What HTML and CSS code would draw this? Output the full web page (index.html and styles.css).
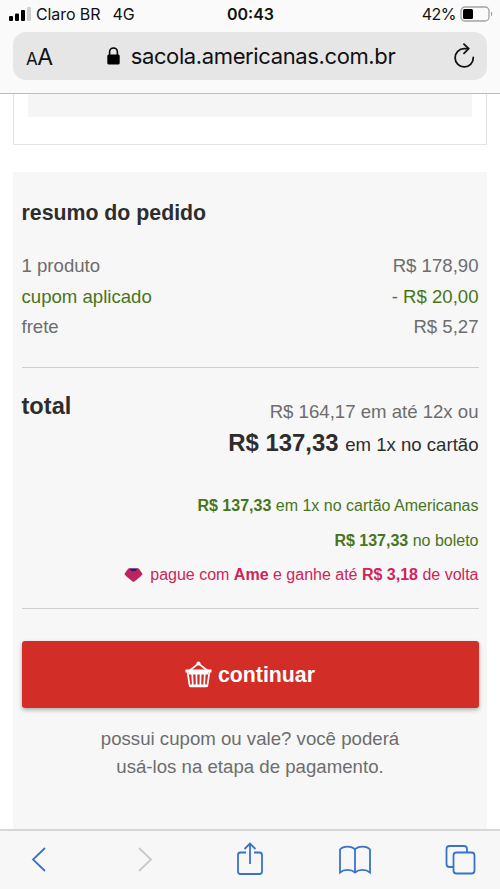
FILE: index.html
```html
<!DOCTYPE html>
<html lang="pt-BR">
<head>
<meta charset="utf-8">
<title>sacola.americanas.com.br</title>
<link rel="stylesheet" href="styles.css">
</head>
<body>
<header class="browser-top">
  <div class="status">
    <div class="carrier">
      <svg class="signal" width="23" height="16" viewBox="0 0 23 16"><rect x="0" y="10" width="4" height="5" rx="1"/><rect x="6" y="7.500" width="4" height="7.500" rx="1"/><rect x="12" y="4" width="4" height="11" rx="1"/><rect x="18" y="1" width="4" height="14" rx="1" fill="#cfcfcf"/></svg>
      <span class="name">Claro BR</span><span class="net">4G</span>
    </div>
    <div class="clock">00:43</div>
    <div class="power"><span>42%</span>
      <svg width="33" height="17" viewBox="0 0 33 17"><rect x="1" y="1" width="28" height="14" rx="4" fill="none" stroke="#a2a2a2" stroke-width="1.3"/><rect x="3" y="3" width="10" height="10" rx="1.5"/><path d="M31 5.500v5q1.300-.7 1.300-2.500t-1.300-2.500z" fill="#a2a2a2"/></svg>
    </div>
  </div>
  <div class="address">
    <div class="reader"><span class="small-a">A</span><span>A</span></div>
    <div class="site">
      <svg width="13" height="18" viewBox="0 0 13 18"><rect x="0.300" y="7.500" width="12.400" height="10" rx="1.500"/><path d="M2.600 8V5a3.900 4 0 0 1 7.800 0v3" fill="none" stroke="#000" stroke-width="1.600"/></svg>
      <span class="url">sacola.americanas.com.br</span>
    </div>
    <svg class="reload" width="22" height="26" viewBox="0 0 22 26" fill="none" stroke="#111" stroke-width="1.800" stroke-linecap="round" stroke-linejoin="round"><path d="M20.300 14.500A9.100 9.100 0 1 1 11.200 5.700h4"/><path d="M11 1.200l4.700 4.500-4.700 4.600"/></svg>
  </div>
</header>
<main>
  <section class="item-card"><div class="item-fill"></div></section>
  <section class="summary">
    <h2>resumo do pedido</h2>
    <div class="row"><span>1 produto</span><span>R$ 178,90</span></div>
    <div class="row green"><span>cupom aplicado</span><span>- R$ 20,00</span></div>
    <div class="row"><span>frete</span><span>R$ 5,27</span></div>
    <hr class="first">
    <div class="total">
      <strong>total</strong>
      <div class="amounts">
        <div class="parcel">R$ 164,17 em até 12x ou</div>
        <div class="cash"><b>R$ 137,33</b> em 1x no cartão</div>
      </div>
    </div>
    <div class="options">
      <div class="green"><b>R$ 137,33</b> em 1x no cartão Americanas</div>
      <div class="green"><b>R$ 137,33</b> no boleto</div>
      <div class="ame">
        <svg width="19" height="15" viewBox="0 0 19 15"><path d="M4.200.5h10.600L18.600 6Q18 7.500 10.400 13.600q-.9.700-1.800 0Q1 7.500.4 6z" fill="#bd2461"/><path d="M5 .5h9L11.200 3.200H7.800z" fill="#32147c"/></svg>
        <span>pague com <b>Ame</b> e ganhe até <b>R$ 3,18</b> de volta</span>
      </div>
    </div>
    <hr class="second">
    <button class="continue">
      <svg width="27" height="27" viewBox="0 0 27 27" fill="none" stroke="#fff"><path d="M4 10L13.500 2.500 23 10" stroke-width="1.700"/><circle cx="13.500" cy="2.600" r="2" fill="#fff" stroke="none"/><path d="M.5 8.500h26v3h-26z" fill="#fff" stroke="none"/><path d="M2.600 11l2 13.500q.1.800 1 .8h15.800q.9 0 1-.8l2-13.500" stroke-width="1.700"/><path d="M4 23.500h19v2.500H4zM4 11h19v2.500H4z" fill="#fff" stroke="none"/><path d="M7.200 12l.6 12M11.400 12l.2 12M15.600 12l-.2 12M19.800 12l-.6 12" stroke-width="1.700"/></svg>
      <span>continuar</span>
    </button>
    <p class="note">possui cupom ou vale? você poderá<br>usá-los na etapa de pagamento.</p>
  </section>
</main>
<nav class="toolbar">
  <svg width="36" height="36" viewBox="0 0 36 36"><path d="M23 7L11 18.500 23 30"/></svg>
  <svg class="off" width="36" height="36" viewBox="0 0 36 36"><path d="M12 7l12 11.500L12 30"/></svg>
  <svg width="36" height="36" viewBox="0 0 36 36"><path d="M14 11.500H8.500q-2.500 0-2.500 2.500v16.500q0 2.500 2.500 2.500h19q2.500 0 2.500-2.500V14q0-2.500-2.500-2.500H22M18 23V2.500M12.500 8L18 2.500 23.500 8"/></svg>
  <svg width="36" height="36" viewBox="0 0 36 36"><path d="M18 8.500Q15.500 5.600 10.500 5.600T3 8.500v23q3-2.600 7.500-2.600T18 31.500q3-2.600 7.500-2.600T33 31.500v-23Q30.500 5.600 25.500 5.600T18 8.500zM18 8.500v23"/></svg>
  <svg width="36" height="36" viewBox="0 0 36 36"><path d="M11 26H7.500q-3 0-3-3V8q0-3 3-3h14.500q3 0 3 3v3.500"/><rect x="11.500" y="11.500" width="21" height="21" rx="3"/></svg>
</nav>
</body>
</html>
```
FILE: styles.css
```css
* { box-sizing: border-box; }
body { margin: 0; width: 500px; height: 889px; display: flex; flex-direction: column; overflow: hidden; background: #fff; font-family: "Liberation Sans", Arial, sans-serif; color: #6d6d6d; }
.browser-top { flex: none; height: 94px; background: #fafafa; border-bottom: 1px solid #bdbdbd; font-family: Inter, sans-serif; color: #111; }
.status { height: 32px; padding: 0 7px 4px 9px; display: grid; grid-template-columns: 1fr auto 1fr; align-items: center; font-size: 16px; }
.carrier, .power { display: flex; align-items: center; }
.signal { margin-right: 4px; }
.name { font-size: 16px; letter-spacing: -0.1px; }
.net { margin-left: 12px; }
.clock { margin-right: 1px; font-weight: 600; }
.power { justify-content: flex-end; gap: 4px; letter-spacing: -0.5px; }
.address { height: 48px; margin: 0 13px; padding: 0 12px 0 13px; border-radius: 13px; background: #e6e6e7; display: flex; align-items: center; justify-content: space-between; }
.reader { width: 26px; padding-top: 2px; font-size: 23px; white-space: nowrap; letter-spacing: -0.6px; }
.small-a { font-size: 17px; }
.site { display: flex; align-items: center; gap: 11px; margin-right: 3px; }
.url { font-size: 22px; letter-spacing: -0.38px; }
main { flex: 1; min-height: 0; overflow: hidden; }
.item-card { height: 51px; margin: 0 13px; padding: 0 14px; border: solid #e3e3e3; border-width: 0 1px 1px; }
.item-fill { height: 23px; background: #f5f5f5; }
.summary { height: 680px; margin: 27px 13px 0; padding: 27px 8.5px 0; background: #f7f7f7; }
h2 { margin: 0 0 23px; font-size: 21.3px; line-height: 29px; color: #2d2d2d; }
.row { display: flex; justify-content: space-between; font-size: 18.6px; line-height: 30.700px; }
.green { color: #47751c; }
hr { margin: 0; border: 0; height: 1px; background: #cfcfcf; }
.first { margin-top: 23.4px; }
.total { display: flex; justify-content: space-between; padding-top: 25px; color: #2d2d2d; }
.total > strong { font-size: 23.6px; line-height: 27px; }
.amounts { text-align: right; padding-top: 4px; font-size: 18.6px; }
.parcel { line-height: 30px; color: #6d6d6d; }
.cash { line-height: 32px; }
.cash b { margin-right: 1.5px; font-size: 23.900px; }
.options { margin-top: 28.5px; font-size: 16px; line-height: 34.500px; text-align: right; }
.ame { display: flex; justify-content: flex-end; align-items: center; gap: 7px; color: #cf2459; }
.second { margin-top: 15px; }
.continue { display: flex; align-items: center; justify-content: center; gap: 6px; width: 100%; height: 67px; margin-top: 32px; padding: 1px 0 0; border: 0; border-radius: 3px; background: #d32d27; box-shadow: 0 2px 4px rgba(0,0,0,.3); color: #fff; font: bold 21.3px "Liberation Sans", Arial, sans-serif; }
.continue span { padding-top: 1px; }
.note { margin: 17px 0 0; text-align: center; font-size: 18.650px; line-height: 28px; }
.toolbar { flex: none; height: 60px; padding: 0 22px 2px; border-top: 2px solid #d7d7d7; background: #f7f7f7; display: flex; align-items: center; justify-content: space-between; }
.toolbar svg { fill: none; stroke: #3a72c8; stroke-width: 1.800; }
.toolbar .off { stroke: #c9c9c9; }
```
